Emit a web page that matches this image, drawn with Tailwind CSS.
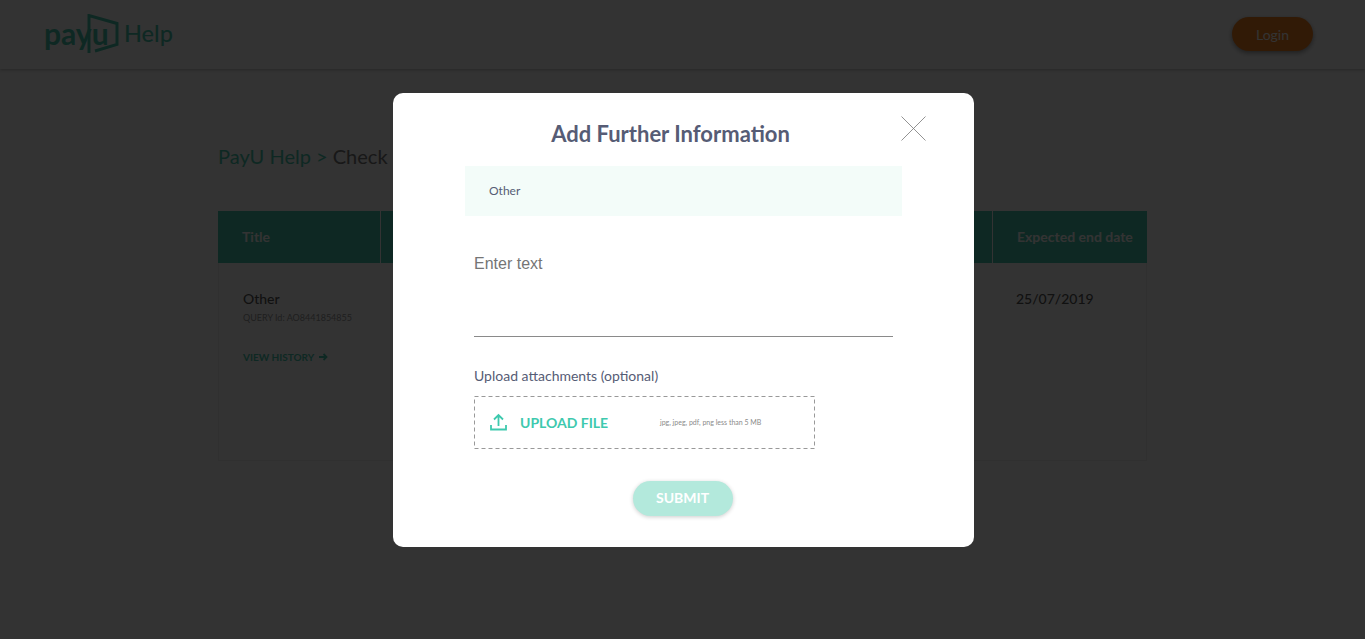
<!DOCTYPE html>
<html>
<head>
  <meta charset="UTF-8">
  <title>PayU Help</title>
  <script src="https://cdn.jsdelivr.net/npm/@tailwindcss/browser@4"></script>
</head>
<body class="bg-[#fdfdfd] h-[639px] overflow-hidden font-['Lato','Noto_Sans',sans-serif] text-[#555]">

  <!-- header -->
  <header class="h-[69px] pb-[1px] bg-white shadow-[0_1px_3px_rgba(0,0,0,0.25)] flex items-center justify-between pl-[45px] pr-[52px]">
    <div class="flex items-center">
      <div class="relative w-[73px] h-[40px]">
        <span class="absolute left-[-1px] top-[-1px] text-[30px] leading-[40px] font-bold text-[#49c9ae]">payu</span>
        <svg class="absolute left-0 top-0" width="80" height="44" viewBox="45 14 80 44" fill="none" stroke="#49c9ae" stroke-width="3">
          <path d="M89 53V15.5L117 23.5V44.5L95 51"/>
        </svg>
      </div>
      <span class="ml-[6px] text-[23.5px] font-medium text-[#49c9ae]">Help</span>
    </div>
    <button class="w-[81px] h-[34px] rounded-full bg-[#f58220] text-white text-[14px] shadow-[0_2px_5px_rgba(0,0,0,0.4)]">Login</button>
  </header>

  <main class="pl-[218px] pr-[218px] pt-[73px]">
    <h1 class="text-[20px] leading-[28px] font-normal"><span class="text-[#49c9ae]">PayU Help &gt;</span> <span class="text-[#777]">Check Status</span></h1>

    <section class="mt-[41px] w-[929px] border border-[#f0f0f0] bg-white">
      <div class="flex h-[52px] bg-[#48c8ad] text-white text-[14px] font-bold -m-px mb-0">
        <div class="w-[163px] border-r border-white flex items-center pl-[24px] pb-[2px]">Title</div>
        <div class="flex-1 border-r border-white"></div>
        <div class="w-[154px] flex items-center pl-[24px] pb-[2px]">Expected end date</div>
      </div>
      <div class="flex h-[197px]">
        <div class="w-[162px] pl-[24px] pt-[27px]">
          <div class="text-[14px] font-medium leading-[18px]">Other</div>
          <div class="text-[9px] leading-[12px] mt-[4px] text-[#999]">QUERY Id: AO8441854855</div>
          <a class="mt-[27px] flex items-center gap-[5px] text-[10px] font-bold leading-[12px] text-[#49c9ae]">VIEW HISTORY
            <svg width="9" height="8" viewBox="0 0 9 8" fill="none" stroke="#49c9ae" stroke-width="1.8"><path d="M0 4H7.5M4.5 1L7.5 4L4.5 7"/></svg>
          </a>
        </div>
        <div class="flex-1"></div>
        <div class="w-[154px] pl-[24px] pt-[27px] text-[14px] font-medium leading-[18px]">25/07/2019</div>
      </div>
    </section>
  </main>

  <!-- modal -->
  <div class="fixed inset-0 bg-black/80 flex items-center justify-center pl-[2px]">
    <div class="relative w-[581px] h-[454px] bg-white rounded-[10px] pt-[26px]">
      <button class="absolute left-[508px] top-[23px]" aria-label="Close">
        <svg class="block" width="25" height="25" viewBox="0 0 25 25" stroke="#777" stroke-width="0.8"><path d="M0.5 0.5L24.5 24.5M24.5 0.5L0.5 24.5"/></svg>
      </button>
      <h2 class="text-[22px] leading-[30px] font-bold text-[#565c75] text-center pr-[26px]">Add Further Information</h2>
      <div class="mx-[72px] mt-[17px] h-[50px] bg-[#f3fcf9] flex items-center pl-[24px] text-[12px] text-[#565c75]">Other</div>
      <div class="mx-[81px] mt-[25px] h-[96px] border-b border-[#8a8a8a] pt-[13px] font-['Liberation_Sans',sans-serif] text-[16px] leading-[20px] text-[#757575]">Enter text</div>
      <div class="mx-[81px] mt-[30px] text-[14px] leading-[18px] text-[#565c75]">Upload attachments (optional)</div>
      <div class="relative ml-[81px] mt-[11px] w-[341px] h-[53px] flex items-center pl-[16px]">
        <svg class="absolute left-0 top-0" width="341" height="53" fill="none" stroke="#999" stroke-width="1" stroke-dasharray="4 3"><rect x="0.5" y="0.5" width="340" height="52"/></svg>
        <svg width="17" height="18" viewBox="0 0 17 18" fill="none" stroke="#3ec9ae" stroke-width="1.8"><path d="M8.5 13V2M4 6.5L8.5 2L13 6.5M1 12V16.5H16V12"/></svg>
        <span class="ml-[13px] w-[140px] text-[14px] font-bold text-[#3ec9ae]">UPLOAD FILE</span>
        <span class="text-[7px] text-[#8a8a8a]">jpg, jpeg, pdf, png less than 5 MB</span>
      </div>
      <div class="flex justify-center mt-[32px] pr-[2px]">
        <button class="w-[100px] h-[35px] pb-[1px] rounded-full bg-[#b3e9dc] text-white text-[14px] font-bold shadow-[0_1px_4px_rgba(0,0,0,0.2)]">SUBMIT</button>
      </div>
    </div>
  </div>
</body>
</html>
